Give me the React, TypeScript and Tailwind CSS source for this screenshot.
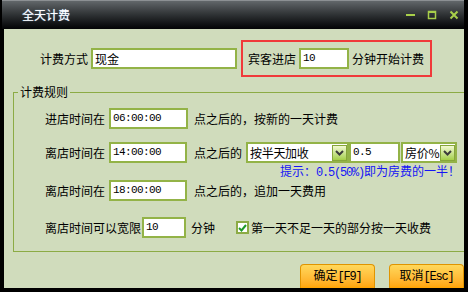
import React from "react";

function Field({ value, className }: { value: string; className: string }) {
  return (
    <div
      className={`flex h-[21px] items-center border-2 border-[#93b347] bg-white pl-[2px] font-['Liberation_Mono',monospace] text-[11px] tracking-[-0.6px] ${className}`}
    >
      {value}
    </div>
  );
}

function Chevron() {
  return (
    <svg width="9" height="6" viewBox="0 0 9 6">
      <path d="M1 1 L4.5 4.5 L8 1" fill="none" stroke="#3c3c3c" strokeWidth="2" />
    </svg>
  );
}

function Select({ value, className }: { value: string; className: string }) {
  return (
    <div className={`flex h-[21px] items-center border-2 border-[#93b347] bg-white pl-[2px] ${className}`}>
      <span className="flex-1 whitespace-nowrap tracking-[-0.3px]">{value}</span>
      <span className="flex h-[16px] w-[15px] shrink-0 items-center justify-center border border-[#86a63a] bg-linear-to-b from-[#f2f9cf] to-[#a4cf45]">
        <Chevron />
      </span>
    </div>
  );
}

function OrangeButton({ label, keyName }: { label: string; keyName: string }) {
  return (
    <div className="flex h-[24px] w-[75px] items-center justify-center rounded-t-[4px] border border-b-0 border-[#e09400] bg-linear-to-b from-[#ffd85a] to-[#ffa400] pb-[2px]">
      <span className="flex items-baseline">
        <span>{label}</span>
        <span className="font-['Liberation_Mono',monospace] text-[12px] tracking-[-1.2px]">[{keyName}]</span>
      </span>
    </div>
  );
}

export default function App() {
  return (
    <div className="flex h-[292px] w-[468px] flex-col overflow-hidden bg-black font-['Noto_Sans_CJK_SC','Noto_Sans',sans-serif] text-[12px] leading-none text-black">
      {/* title bar */}
      <div className="ml-[2px] flex h-[29px] w-[462px] items-center border-t border-[#8c9093] bg-linear-to-b from-[#62676a] to-[#040506] pl-[20px]">
        <span className="text-[12px] text-white [text-shadow:0_0_1px_#9cf]">全天计费</span>
        <div className="ml-auto mr-[5px] flex items-center gap-[12px]">
          <svg width="10" height="10" viewBox="0 0 10 10">
            <rect x="1" y="4" width="9" height="2" fill="#a8cf4a" />
          </svg>
          <svg width="10" height="10" viewBox="0 0 10 10">
            <rect x="1.5" y="1.5" width="7" height="7" fill="none" stroke="#a8cf4a" strokeWidth="1.5" />
            <rect x="1" y="1" width="8" height="2" fill="#a8cf4a" />
          </svg>
          <svg width="10" height="10" viewBox="0 0 10 10">
            <path d="M1.5 1.5 L8.5 8.5 M8.5 1.5 L1.5 8.5" stroke="#a8cf4a" strokeWidth="2" />
          </svg>
        </div>
      </div>

      {/* body */}
      <div className="mx-[4px] flex h-[259px] flex-col bg-[#d0dcbc]">
        {/* row 1 */}
        <div className="mt-[11px] flex h-[37px] items-center pl-[36px]">
          <span>计费方式</span>
          <div className="ml-[3px] flex h-[21px] w-[146px] items-center border-2 border-[#93b347] bg-white pl-[2px]">
            现金
          </div>
          <div className="ml-[4px] flex h-[37px] w-[191px] items-center border-2 border-[#f03a3a] pl-[5px]">
            <span>宾客进店</span>
            <Field value="10" className="ml-[3px] w-[50px]" />
            <span className="ml-[3px]">分钟开始计费</span>
          </div>
        </div>

        {/* group box */}
        <div className="relative ml-[9px] mt-[15px] flex h-[160px] flex-col border border-r-0 border-[#8cab45] pl-[31px] pr-[3px]">
          <span className="absolute left-[4px] top-[-7px] bg-[#d0dcbc] px-[2px]">计费规则</span>

          <div className="mt-[15px] flex h-[21px] items-center">
            <span className="w-[64px]">进店时间在</span>
            <Field value="06:00:00" className="w-[79px]" />
            <span className="ml-[6px]">点之后的，按新的一天计费</span>
          </div>

          <div className="mt-[13px] flex h-[21px] items-center">
            <span className="w-[64px]">离店时间在</span>
            <Field value="14:00:00" className="w-[78px]" />
            <span className="ml-[7px] w-[52px]">点之后的</span>
            <Select value="按半天加收" className="w-[103px]" />
            <Field value="0.5" className="w-[51px]" />
            <Select value="房价%" className="ml-[1px] w-[56px]" />
          </div>

          <div className="flex h-[17px] items-center justify-end pr-[1px] text-[#1515f5]">
            <span className="flex items-baseline">
              <span>提示：</span>
              <span className="font-['Liberation_Mono',monospace] text-[12px] tracking-[-1.2px]">0.5(50%)</span>
              <span>即为房费的一半！</span>
            </span>
          </div>

          <div className="flex h-[21px] items-center">
            <span className="w-[64px]">离店时间在</span>
            <Field value="18:00:00" className="w-[78px]" />
            <span className="ml-[7px]">点之后的，追加一天费用</span>
          </div>

          <div className="mt-[16px] flex h-[21px] items-center">
            <span className="w-[97px]">离店时间可以宽限</span>
            <Field value="10" className="w-[44px]" />
            <span className="ml-[5px]">分钟</span>
            <span className="ml-[21px] flex h-[13px] w-[13px] items-center justify-center border-2 border-[#8cab45] bg-white">
              <svg width="9" height="8" viewBox="0 0 9 8">
                <path d="M1 4 L3.5 6.5 L8 1" fill="none" stroke="#1f9a2a" strokeWidth="2" />
              </svg>
            </span>
            <span className="ml-[2px]">第一天不足一天的部分按一天收费</span>
          </div>
        </div>

        {/* buttons */}
        <div className="mt-[12px] flex justify-end gap-[14px]">
          <OrangeButton label="确定" keyName="F9" />
          <OrangeButton label="取消" keyName="Esc" />
        </div>
      </div>
    </div>
  );
}
